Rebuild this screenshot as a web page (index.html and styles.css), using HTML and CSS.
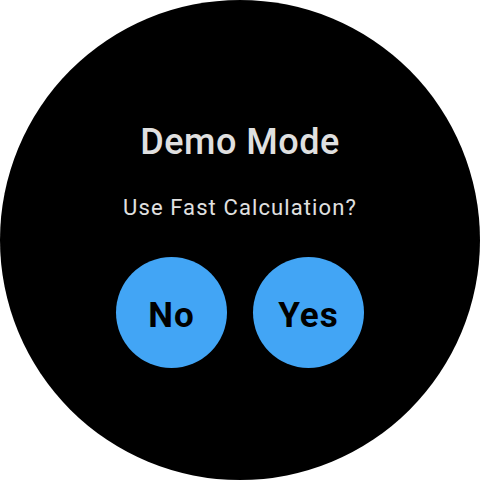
FILE: index.html
```html
<!DOCTYPE html>
<html>
<head>
<meta charset="utf-8">
<link rel="stylesheet" href="styles.css">
</head>
<body>
<div class="watch">
  <h1 class="title">Demo Mode</h1>
  <p class="question">Use Fast Calculation?</p>
  <div class="actions">
    <button class="choice">No</button>
    <button class="choice">Yes</button>
  </div>
</div>
</body>
</html>
```
FILE: styles.css
```css
html, body {
  margin: 0;
  padding: 0;
  background: #ffffff;
}
.watch {
  width: 480px;
  height: 480px;
  border-radius: 50%;
  background: #000000;
  display: flex;
  flex-direction: column;
  align-items: center;
  padding-top: 124px;
  box-sizing: border-box;
  font-family: Roboto, "Noto Sans", sans-serif;
}
.title {
  margin: 0;
  font-size: 36px;
  line-height: 36px;
  font-weight: 500;
  letter-spacing: 0.5px;
  color: #e0e0e0;
}
.question {
  margin: 37px 0 0;
  font-size: 22px;
  line-height: 22px;
  font-weight: 400;
  letter-spacing: 1.1px;
  color: #e0e0e0;
}
.actions {
  margin-top: 38px;
  display: flex;
  gap: 26px;
}
.choice {
  width: 111px;
  height: 111px;
  border-radius: 50%;
  border: none;
  padding: 6px 0 0;
  box-sizing: border-box;
  background: #42a5f5;
  color: #000000;
  font-family: Roboto, "Noto Sans", sans-serif;
  font-size: 35px;
  font-weight: 700;
  letter-spacing: 1px;
  display: flex;
  align-items: center;
  justify-content: center;
}
```
